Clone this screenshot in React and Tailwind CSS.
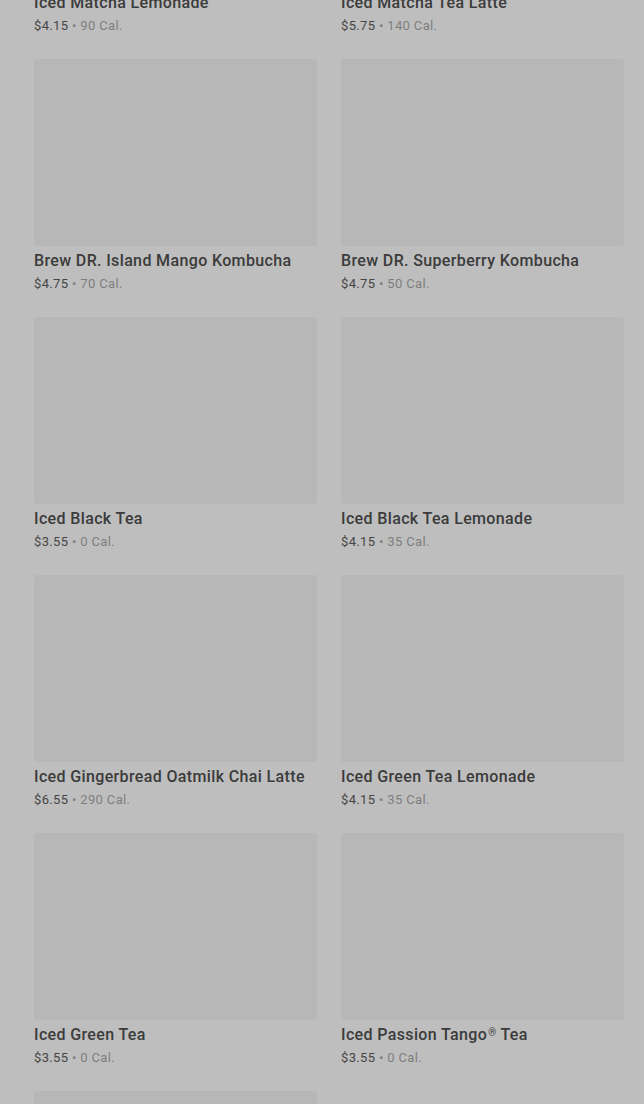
import React from "react";

const items = [
  ["Iced Matcha Lemonade", "$4.15", "90 Cal."],
  ["Iced Matcha Tea Latte", "$5.75", "140 Cal."],
  ["Brew DR. Island Mango Kombucha", "$4.75", "70 Cal."],
  ["Brew DR. Superberry Kombucha", "$4.75", "50 Cal."],
  ["Iced Black Tea", "$3.55", "0 Cal."],
  ["Iced Black Tea Lemonade", "$4.15", "35 Cal."],
  ["Iced Gingerbread Oatmilk Chai Latte", "$6.55", "290 Cal."],
  ["Iced Green Tea Lemonade", "$4.15", "35 Cal."],
  ["Iced Green Tea", "$3.55", "0 Cal."],
  ["Iced Passion Tango", "$3.55", "0 Cal.", true],
  ["Iced Peach Green Tea", "$4.15", "60 Cal."],
];

function Card({ name, price, cal, reg }) {
  return (
    <div className="flex flex-col">
      <div className="h-[187px] rounded-[3px] bg-[#b7b7b7]" />
      <div className="mt-[3px] h-[24px] overflow-visible text-[16px] leading-[24px] font-medium text-[#3b3b3b] tracking-[0.36px] whitespace-nowrap">
        {name}
        {reg ? (
          <>
            <span className="relative -top-[2px] ml-[1px] inline-block align-top text-[10px] leading-[24px]">®</span> Tea
          </>
        ) : null}
      </div>
      <div className="mt-[1px] text-[13px] leading-[20px] text-[#464646] tracking-[0.35px]">
        {price} <span className="text-[#7e7e7e]">• {cal}</span>
      </div>
    </div>
  );
}

export default function App() {
  return (
    <div
      className="h-[1104px] w-[644px] overflow-hidden bg-[#bebebe]"
      style={{ fontFamily: "Roboto, 'Noto Sans', sans-serif" }}
    >
      <div className="-mt-[199px] ml-[34px] mr-[20px] grid grid-cols-2 gap-x-[24px] gap-y-[23px]">
        {items.map(([n, p, c, r]) => (
          <Card key={n} name={n} price={p} cal={c} reg={r} />
        ))}
      </div>
    </div>
  );
}
